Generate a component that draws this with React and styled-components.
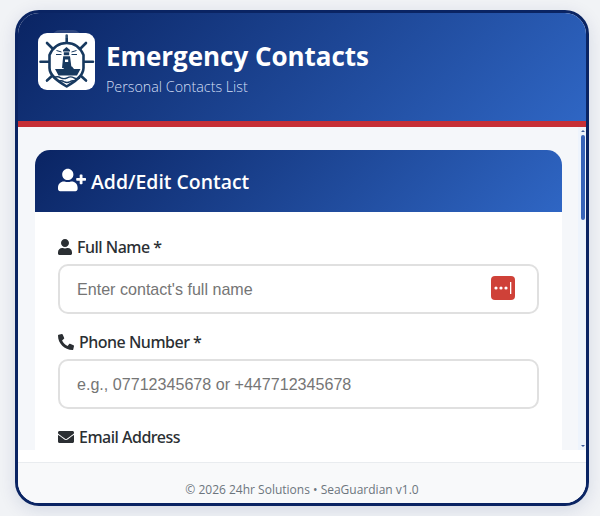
import React from "react";
import styled, { createGlobalStyle } from "styled-components";
import { FaUser, FaPhone, FaEnvelope, FaUserPlus } from "react-icons/fa";

const Global = createGlobalStyle`
  html, body { margin: 0; padding: 0; width: 600px; height: 516px; overflow: hidden; background: #f1f3f6; }
  * { box-sizing: border-box; }
  body { font-family: "Open Sans", "Noto Sans", sans-serif; }
`;

const Page = styled.div`
  width: 600px;
  height: 516px;
  padding: 10px 11px 10px 15px;
`;

const Shell = styled.div`
  position: relative;
  width: 574px;
  height: 496px;
  display: flex;
  flex-direction: column;
  background: #fff;
  border: 3px solid #0a2463;
  border-radius: 24px;
  overflow: hidden;
  box-shadow: 0 4px 18px rgba(10, 36, 99, 0.12);
`;

const Header = styled.header`
  height: 114px;
  flex: none;
  display: flex;
  align-items: flex-start;
  gap: 11px;
  padding: 20px 20px 0;
  background: linear-gradient(135deg, #0a2463 0%, #2f66c4 100%);
  border-bottom: 6px solid #c62f36;
`;

const LogoBox = styled.div`
  position: relative;
  width: 57px;
  height: 57px;
  flex: none;
  background: #fff;
  border-radius: 9px;
  &::before {
    content: "";
    position: absolute;
    left: 14px;
    top: -3px;
    width: 29px;
    height: 8px;
    border-radius: 15px 15px 0 0;
    background: rgba(255, 255, 255, 0.14);
  }
`;

const Titles = styled.div`
  display: flex;
  flex-direction: column;
  padding-top: 6px;
`;

const Title = styled.h1`
  margin: 0;
  color: #fff;
  font-size: 26px;
  line-height: 35px;
  font-weight: 700;
  letter-spacing: -0.04px;
`;

const Subtitle = styled.p`
  margin: 3px 0 0;
  color: #d3dff5;
  font-size: 14.3px;
  line-height: 19px;
  font-weight: 300;
`;

const Scroll = styled.main`
  position: relative;
  height: 323px;
  flex: none;
  overflow: hidden;
  background: #f5f7fa;
  padding: 23px 24px 0 17px;
`;

const Card = styled.section`
  width: 527px;
  height: 400px;
  background: #fff;
  border-radius: 15px;
  overflow: hidden;
`;

const CardHead = styled.div`
  height: 62px;
  display: flex;
  align-items: center;
  gap: 5px;
  padding: 0 23px;
  background: linear-gradient(135deg, #0a2463 0%, #2f66c4 100%);
  color: #fff;
  font-size: 19.4px;
  font-weight: 600;
  svg { font-size: 28px; flex: none; margin-top: -3px; }
`;

const CardBody = styled.div`
  padding: 24px 23px 0;
  display: flex;
  flex-direction: column;
  gap: 17px;
`;

const Field = styled.div`
  display: flex;
  flex-direction: column;
  gap: 6px;
`;

const Label = styled.label`
  display: flex;
  align-items: center;
  gap: ${(p) => p.$gap}px;
  height: 22px;
  color: #2b2f33;
  font-family: "Noto Sans", "Open Sans", sans-serif;
  font-size: 16px;
  font-weight: 500;
  letter-spacing: -0.5px;
  svg { font-size: 16px; flex: none; margin-left: ${(p) => p.$shift || 0}px; }
`;

const InputWrap = styled.div`
  position: relative;
  height: 50px;
`;

const Input = styled.input`
  width: 100%;
  height: 100%;
  padding: 0 17px;
  border: 2px solid #e0e0e0;
  border-radius: 10px;
  background: #fff;
  font-family: "Liberation Sans", Arial, sans-serif;
  font-size: 16.1px;
  color: #333;
  outline: none;
  &::placeholder { color: #757575; opacity: 1; }
`;

const PassBadge = styled.span`
  position: absolute;
  right: 24px;
  top: 12px;
  width: 24px;
  height: 24px;
  border-radius: 4px;
  background: #cf4138;
  display: flex;
  align-items: center;
  justify-content: center;
`;

const ScrollTrack = styled.div`
  position: absolute;
  top: 0;
  right: 0;
  bottom: 0;
  width: 8px;
  background: #eef4fc;
`;

const ScrollThumb = styled.div`
  position: absolute;
  top: 8px;
  left: 3px;
  width: 4px;
  height: 85px;
  border-radius: 2px;
  background: #3763b8;
`;

const Arrow = styled.div`
  position: absolute;
  left: 3px;
  width: 0;
  height: 0;
  border-left: 2px solid transparent;
  border-right: 2px solid transparent;
  ${(p) => (p.$up ? "top: 3px; border-bottom: 2px solid #3c5a9a;" : "bottom: 3px; border-top: 2px solid #3c5a9a;")}
`;

const Spacer = styled.div`
  height: 12px;
  flex: none;
  background: #fff;
`;

const Footer = styled.footer`
  flex: 1;
  border-top: 1px solid #e9ecef;
  background: #f8f9fa;
  color: #6c757d;
  font-size: 12px;
  display: flex;
  align-items: center;
  justify-content: center;
  padding-top: 12px;
`;

const Logo = () => (
  <svg width="57" height="57" viewBox="0 0 57 57" fill="none">
    <g stroke="#17395f" strokeLinecap="round" strokeWidth="2.6">
      <path d="M28.7 2.5V10M2.5 28.7H11M46 28.7H55" />
      <path d="M9 10L15.5 16.5M48 10L41.5 16.5M9 47.5L15 42M48 47.5L42 42" />
    </g>
    <path d="M11.5 22C15 14 21 10 28.7 10C36 10 42 14 45.5 22V35C45.5 43 36 49 28.7 53.5C21 49 11.5 43 11.5 35Z" fill="#fff" stroke="#17395f" strokeWidth="2.6" strokeLinejoin="round" />
    <path d="M28.5 14L32 17V18.5H25V17Z" fill="#17395f" />
    <path d="M25.8 19.3H31.2V22.3H25.8Z" fill="#17395f" />
    <path d="M25.2 23.2H32L33.5 35H24Z" fill="#17395f" />
    <path d="M27 26.5H30.2V29H27Z" fill="#fff" />
    <path d="M18.5 17.5L23.5 19M18 21.5H23.5M38.5 17.5L33.5 19M39 21.5H33.5" stroke="#17395f" strokeWidth="1" />
    <path d="M17 36H25L28 33.5H34L36 36H42.5L39 42.5H20.5Z" fill="#17395f" />
    <path d="M15.5 45C18 43.5 20.5 43.5 22.7 44.8C25 46 27 46 29.2 44.8C31.5 43.5 33.7 43.5 36 44.8C38 46 40 46 42 45" stroke="#17395f" strokeWidth="1.4" />
    <path d="M20 48.7C22 47.5 24 47.5 26 48.7C28 49.8 30 49.8 32 48.7C34 47.5 36 47.5 38 48.7" stroke="#17395f" strokeWidth="1.4" />
  </svg>
);

const KeyDots = () => (
  <svg width="20" height="14" viewBox="0 0 20 14" fill="#fff">
    <circle cx="3" cy="7" r="1.6" />
    <circle cx="8" cy="7" r="1.6" />
    <circle cx="13" cy="7" r="1.6" />
    <rect x="17" y="1" width="1.3" height="12" />
  </svg>
);

export default function App() {
  return (
    <Page>
      <Global />
      <Shell>
        <Header>
          <LogoBox><Logo /></LogoBox>
          <Titles>
            <Title>Emergency Contacts</Title>
            <Subtitle>Personal Contacts List</Subtitle>
          </Titles>
        </Header>
        <Scroll>
          <Card>
            <CardHead><FaUserPlus />Add/Edit Contact</CardHead>
            <CardBody>
              <Field>
                <Label $gap={4} $shift={-1}><FaUser />Full Name *</Label>
                <InputWrap>
                  <Input placeholder="Enter contact's full name" />
                  <PassBadge><KeyDots /></PassBadge>
                </InputWrap>
              </Field>
              <Field>
                <Label $gap={5}><FaPhone style={{ transform: "scaleX(-1)" }} />Phone Number *</Label>
                <InputWrap>
                  <Input placeholder="e.g., 07712345678 or +447712345678" />
                </InputWrap>
              </Field>
              <Field>
                <Label $gap={5}><FaEnvelope />Email Address</Label>
              </Field>
            </CardBody>
          </Card>
          <ScrollTrack>
            <Arrow $up />
            <ScrollThumb />
            <Arrow />
          </ScrollTrack>
        </Scroll>
        <Spacer />
        <Footer>© 2026 24hr Solutions • SeaGuardian v1.0</Footer>
      </Shell>
    </Page>
  );
}
